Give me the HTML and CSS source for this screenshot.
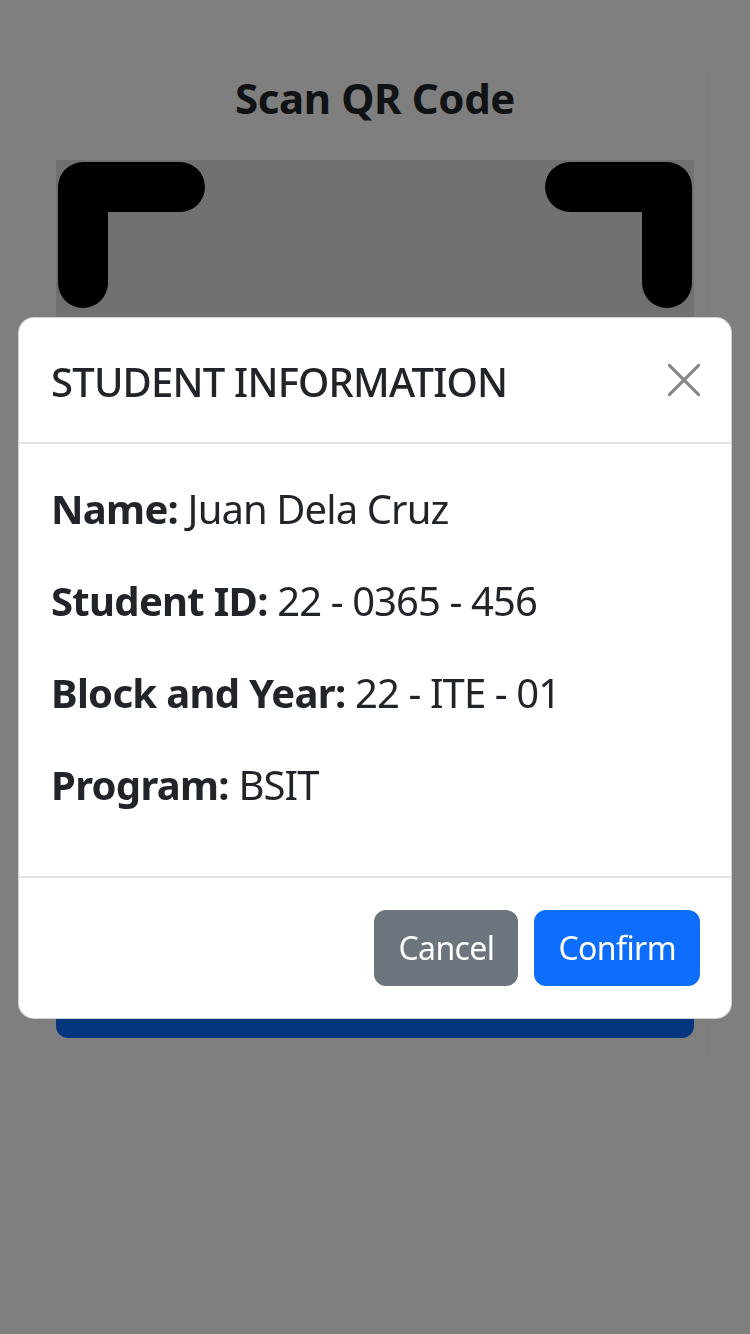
FILE: index.html
```html
<!DOCTYPE html>
<html lang="en">
<head>
<meta charset="utf-8">
<title>Scan QR Code</title>
<link rel="stylesheet" href="styles.css">
</head>
<body>
<div class="page">
  <div class="card">
    <h1 class="title">Scan QR Code</h1>
    <div class="scanner">
      <svg class="corners" width="638" height="638" viewBox="0 0 638 638" aria-hidden="true">
        <g fill="none" stroke="#000" stroke-width="50" stroke-linecap="round" stroke-linejoin="round">
          <path d="M27 123 V27 H124"/>
          <path d="M514 27 H611 V123"/>
          <path d="M27 515 V611 H124"/>
          <path d="M514 611 H611 V515"/>
        </g>
      </svg>
    </div>
    <button class="scan-btn">Scan</button>
  </div>
</div>

<div class="backdrop"></div>

<div class="modal">
  <div class="modal-content">
    <div class="modal-header">
      <h5 class="modal-title">STUDENT INFORMATION</h5>
      <button class="btn-close" aria-label="Close">
        <svg width="32" height="32" viewBox="0 0 32 32" aria-hidden="true">
          <path d="M1 1 L31 31 M31 1 L1 31" stroke="#888" stroke-width="3.2" stroke-linecap="round"/>
        </svg>
      </button>
    </div>
    <div class="modal-body">
      <p><strong>Name:</strong> Juan Dela Cruz</p>
      <p><strong>Student ID:</strong> 22 - 0365 - 456</p>
      <p><strong>Block and Year:</strong> 22 - ITE - 01</p>
      <p><strong>Program:</strong> BSIT</p>
    </div>
    <div class="modal-footer">
      <button class="btn btn-secondary">Cancel</button>
      <button class="btn btn-primary">Confirm</button>
    </div>
  </div>
</div>
</body>
</html>
```

FILE: styles.css
```css
* { box-sizing: border-box; }

html, body {
  margin: 0;
  padding: 0;
  background: #fff;
  font-family: "Noto Sans", "Open Sans", sans-serif;
  color: #212529;
}

.page {
  padding: 50px 43px;
}

.card {
  background: #fff;
  border-radius: 20px;
  box-shadow: 0 0 10px rgba(0, 0, 0, 0.025);
  padding: 22px 13px 40px;
  display: flex;
  flex-direction: column;
  align-items: center;
}

.title {
  margin: 0 0 36px;
  font-size: 42px;
  line-height: 52px;
  font-weight: 700;
  letter-spacing: -0.4px;
  color: #212529;
}

.scanner {
  position: relative;
  width: 638px;
  height: 638px;
  background: #e2e2e2;
  margin-bottom: 162px;
}

.corners {
  position: absolute;
  left: 0;
  top: 0;
}

.scan-btn {
  width: 638px;
  height: 78px;
  border: 0;
  border-radius: 12px;
  background: #0d6efd;
  color: #fff;
  font-family: inherit;
  font-size: 32px;
}

.backdrop {
  position: fixed;
  inset: 0;
  background: rgba(0, 0, 0, 0.5);
}

.modal {
  position: fixed;
  inset: 0;
  display: flex;
  align-items: center;
  justify-content: center;
  padding: 2px 18px 0;
}

.modal-content {
  width: 100%;
  background: #fff;
  border: 1px solid rgba(0, 0, 0, 0.175);
  border-radius: 16px;
  display: flex;
  flex-direction: column;
}

.modal-header {
  display: flex;
  align-items: center;
  justify-content: space-between;
  padding: 32px 31px 32px 32px;
  border-bottom: 2px solid #dee2e6;
}

.modal-title {
  margin: 0;
  padding-top: 3px;
  height: 60px;
  font-size: 40px;
  line-height: 57px;
  font-weight: 500;
  letter-spacing: -0.8px;
}

.btn-close {
  border: 0;
  background: transparent;
  padding: 0;
  width: 32px;
  height: 32px;
  display: flex;
}

.modal-body {
  padding: 35px 32px 29px;
}

.modal-body p {
  margin: 0 0 32px;
  font-size: 40px;
  line-height: 60px;
  letter-spacing: -0.9px;
}

.modal-body strong {
  font-weight: 700;
  letter-spacing: -0.7px;
}

.modal-footer {
  display: flex;
  justify-content: flex-end;
  align-items: center;
  gap: 16px;
  padding: 32px 31px 32px;
  border-top: 2px solid #dee2e6;
}

.btn {
  margin: 0;
  border: 2px solid transparent;
  border-radius: 12px;
  padding: 12px 22px;
  font-family: inherit;
  font-size: 32px;
  line-height: 48px;
  color: #fff;
  letter-spacing: -0.6px;
}

.btn-secondary {
  background: #6c757d;
  border-color: #6c757d;
}

.btn-primary {
  background: #0d6efd;
  border-color: #0d6efd;
}
```
